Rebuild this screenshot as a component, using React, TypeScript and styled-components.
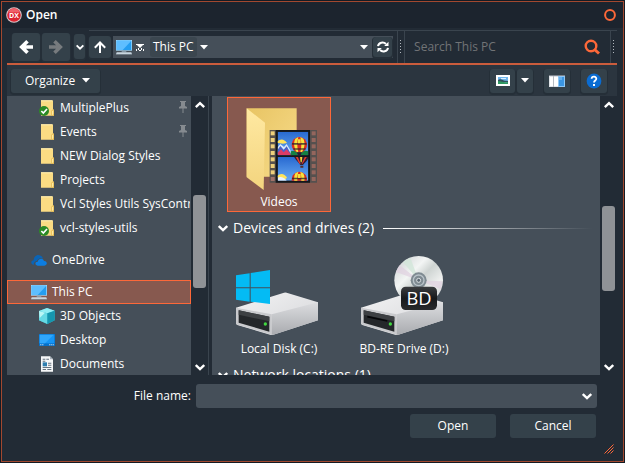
import React from "react";
import styled, { createGlobalStyle, css } from "styled-components";

const color = {
  outer: "#141b24",
  frame: "#a2482f",
  title: "#1c242e",
  shell: "#222b35",
  bar: "#2b353f",
  button: "#34414a",
  buttonEdge: "#252f38",
  field: "#454f59",
  line: "#3a444e",
  accent: "#cb5c3c",
  hot: "#fd6839",
  selected: "#87594f",
  thumb: "#8f9296",
  muted: "#717376",
};

const GlobalStyle = createGlobalStyle`
  * { box-sizing: border-box; }
  html, body, #root { height: 100%; }
  body {
    margin: 0;
    background: ${color.outer};
    color: #fff;
    font: 12px/16px "Open Sans", "Noto Sans", sans-serif;
  }
  button, input { font: inherit; color: inherit; margin: 0; border: 0; padding: 0; background: none; }
  svg { display: block; flex: none; }
`;

const Dialog = styled.main`
  height: 100vh;
  border: 1px solid ${color.outer};
  display: flex;
`;

const Frame = styled.div`
  flex: 1;
  min-width: 0;
  display: flex;
  flex-direction: column;
  border: 1px solid ${color.frame};
  background: ${color.shell};
`;

const TitleBar = styled.header`
  flex: none;
  display: flex;
  align-items: center;
  gap: 4px;
  height: 26px;
  padding: 0 6px 0 4px;
  background: ${color.title};
`;

const Title = styled.h1`
  flex: 1;
  margin: 0;
  font-size: 12px;
  font-weight: 600;
`;

const IconButton = styled.button<{ $w: number; $h: number; $flat?: boolean }>`
  flex: none;
  display: flex;
  align-items: center;
  justify-content: center;
  width: ${(p) => p.$w}px;
  height: ${(p) => p.$h}px;
  border-radius: 3px;
  ${(p) =>
    !p.$flat &&
    css`
      background: ${color.button};
      box-shadow: 0 1px 0 1px ${color.buttonEdge};
    `}
`;

const Body = styled.div`
  flex: 1;
  min-height: 0;
  display: flex;
  flex-direction: column;
  padding: 2px 6px 0 5px;
`;

const NavBar = styled.div`
  flex: none;
  display: flex;
  align-items: center;
  height: 33px;
  padding-left: 5px;
`;

const History = styled.div`
  display: flex;
  align-items: center;
  gap: 2px;
  margin-right: 4px;
`;

const NavRest = styled.div`
  flex: 1;
  min-width: 0;
  align-self: stretch;
  display: flex;
  align-items: center;
  margin-left: 4px;
  border-top: 1px solid ${color.line};
`;

const Address = styled.div`
  flex: 1;
  min-width: 0;
  display: flex;
  align-items: center;
  height: 22px;
  margin: 0 4px 0 2px;
  padding: 0 1px 0 3px;
  background: ${color.field};
`;

const Crumb = styled.button`
  height: 20px;
  padding: 0 3px;
  margin-left: 2px;
  border-radius: 3px;
  background: #3b464f;
`;

const Spacer = styled.div`
  flex: 1;
`;

const Grip = styled.div`
  flex: none;
  align-self: stretch;
  display: flex;
  align-items: center;
  justify-content: center;
  width: 7px;
  border-left: 1px solid ${color.line};
`;

const Search = styled.div`
  flex: none;
  width: 39%;
  align-self: stretch;
  display: flex;
  align-items: center;
  padding: 0 9px;
  border-left: 1px solid ${color.line};
`;

const SearchInput = styled.input`
  flex: 1;
  min-width: 0;
  outline: 0;
  &::placeholder { color: ${color.muted}; opacity: 1; }
`;

const CommandBar = styled.div`
  flex: none;
  display: flex;
  align-items: center;
  height: 33px;
  padding: 0 10px 0 4px;
  border-top: 2px solid ${color.accent};
  background: ${color.bar};
`;

const Organize = styled.button`
  display: flex;
  align-items: center;
  gap: 7px;
  height: 24px;
  padding: 0 10px 0 14px;
  border-radius: 3px;
  background: ${color.button};
  box-shadow: 0 1px 0 1px ${color.buttonEdge};
`;

const Commands = styled.div`
  display: flex;
  gap: 2px;
  margin-left: 11px;
`;

const Content = styled.div`
  flex: 1;
  min-height: 0;
  display: flex;
`;

const Tree = styled.nav`
  flex: none;
  display: flex;
  width: 201px;
`;

const TreeList = styled.ul`
  flex: 1;
  min-width: 0;
  margin: 0;
  padding: 0;
  overflow: hidden;
  list-style: none;
  background: ${color.field};
`;

const TreeItem = styled.button<{ $level: number; $selected?: boolean }>`
  display: flex;
  align-items: center;
  gap: 5px;
  width: 100%;
  height: 24px;
  padding-left: ${(p) => 15 + p.$level * 8}px;
  border: 1px solid ${(p) => (p.$selected ? color.hot : "transparent")};
  background: ${(p) => (p.$selected ? color.selected : "transparent")};
  overflow: hidden;
  white-space: nowrap;
  text-align: left;
`;

const TreeGroup = styled.li`
  & + & { margin-top: 8px; }
`;

const ItemText = styled.span`
  flex: 1 0 auto;
`;

const Scroll = styled.div`
  flex: none;
  display: flex;
  flex-direction: column;
  align-items: center;
  width: 17px;
  background: ${color.shell};
`;

const Track = styled.div`
  flex: 1;
  display: flex;
  flex-direction: column;
  width: 13px;
`;

const TrackPart = styled.div<{ $share: number; $thumb?: boolean }>`
  flex: ${(p) => p.$share} 0 0;
  border-radius: 3px;
  background: ${(p) => (p.$thumb ? color.thumb : "transparent")};
`;

const Files = styled.section`
  flex: 1;
  min-width: 0;
  display: flex;
  border-left: 1px solid ${color.line};
  padding-left: 3px;
`;

const FileList = styled.div`
  flex: 1;
  min-width: 0;
  overflow: hidden;
  padding: 1px 8px 0 6px;
  background: ${color.field};
`;

const Tiles = styled.div`
  display: flex;
  flex-wrap: wrap;
  gap: 21px;
  padding-left: 9px;
`;

const Tile = styled.button<{ $selected?: boolean }>`
  display: flex;
  flex-direction: column;
  align-items: center;
  gap: 4px;
  width: 104px;
  height: 115px;
  border: 1px solid ${(p) => (p.$selected ? color.hot : "transparent")};
  background: ${(p) => (p.$selected ? color.selected : "transparent")};
  white-space: nowrap;
`;

const GroupHeader = styled.h2`
  display: flex;
  align-items: center;
  gap: 5px;
  height: 32px;
  margin: 0;
  font-size: 14px;
  line-height: 20px;
  font-weight: 400;
  white-space: nowrap;
`;

const Rule = styled.span`
  flex: 1;
  height: 1px;
  margin-left: 4px;
  background: linear-gradient(to right, #fff, #c8cbce 30%, ${color.field});
`;

const Footer = styled.footer`
  flex: none;
  display: flex;
  flex-direction: column;
  gap: 6px;
  padding: 9px 20px 6px 0;
`;

const FileRow = styled.div`
  display: flex;
  align-items: center;
  gap: 5px;
`;

const FileLabel = styled.label`
  width: 184px;
  text-align: right;
`;

const Combo = styled.div`
  flex: 1;
  display: flex;
  align-items: center;
  height: 24px;
  padding: 0 1px 0 6px;
  border-radius: 3px;
  background: ${color.field};
`;

const FileInput = styled.input`
  flex: 1;
  min-width: 0;
  outline: 0;
`;

const Actions = styled.div`
  display: flex;
  justify-content: flex-end;
  gap: 14px;
  padding-right: 1px;
`;

const ActionButton = styled.button`
  width: 86px;
  height: 24px;
  border-radius: 3px;
  background: ${color.button};
`;

const GripRow = styled.div`
  flex: none;
  display: flex;
  justify-content: flex-end;
  padding: 0 3px 7px 0;
`;

type ChevronProps = { up?: boolean; size?: number; weight?: number };

const Chevron = ({ up, size = 10, weight = 2.4 }: ChevronProps) => (
  <svg width={size} height={size} viewBox="0 0 10 10" fill="none" stroke="#fff" strokeWidth={weight}>
    <path d={up ? "M.8 7.2 5 3.2l4.2 4" : "M.8 3 5 7l4.2-4"} />
  </svg>
);

const Caret = () => (
  <svg width="8" height="5" viewBox="0 0 8 5" fill="#fff"><path d="M0 0h8L4 4.6z" /></svg>
);

const Arrow = ({ kind }: { kind: "back" | "forward" | "up" }) =>
  kind === "up" ? (
    <svg width="12" height="12" viewBox="0 0 12 12" fill="none" stroke="#fff" strokeWidth="2">
      <path d="M6 12V1.500M.8 6.700 6 1.500l5.200 5.200" />
    </svg>
  ) : (
    <svg width="14" height="14" viewBox="0 0 14 14" fill="none" stroke={kind === "back" ? "#fff" : "#777b7e"} strokeWidth="3.600">
      <path d={kind === "back" ? "M14 7H3M8.500 1.300 2.700 7l5.800 5.700" : "M0 7h11M5.500 1.300 11.300 7l-5.800 5.700"} />
    </svg>
  );

const AppLogo = () => (
  <svg width="16" height="16" viewBox="0 0 16 16">
    <circle cx="8" cy="8" r="7.8" fill="#d9c9cc" />
    <circle cx="8" cy="8" r="6.8" fill="#dc2430" />
    <path d="M2 5.5a6.5 6.5 0 0 1 12 0z" fill="#ef6068" />
    <text x="8" y="10.6" fontFamily="Open Sans" fontSize="7" fontWeight="700" fill="#fff" textAnchor="middle">DX</text>
  </svg>
);

const CloseIcon = () => (
  <svg width="12" height="12" viewBox="0 0 12 12"><circle cx="6" cy="6" r="4.9" fill="none" stroke={color.hot} strokeWidth="2" /></svg>
);

const RefreshIcon = () => (
  <svg width="12" height="12" viewBox="0 0 12 12" fill="none" stroke="#fff" strokeWidth="2">
    <path d="M1 5.2C1.6 1.4 6.5.6 9 3M11 6.8C10.4 10.6 5.500 11.400 3 9" />
    <path d="M11.500.8V5H7.200zM.5 11.200V7h4.300z" fill="#fff" stroke="none" />
  </svg>
);

const SearchIcon = () => (
  <svg width="16" height="16" viewBox="0 0 16 16" fill="none" stroke={color.hot} strokeWidth="2.4">
    <circle cx="7" cy="7" r="5.300" /><path d="m10 10 5 4.500" strokeWidth="3" />
  </svg>
);

const Dots = () => (
  <svg width="2" height="14" viewBox="0 0 2 14" fill="#b4bac0">
    {[0, 3, 6, 9, 12].map((y) => <rect key={y} y={y} width="1" height="1" />)}
  </svg>
);

const OverflowIcon = () => (
  <svg width="8" height="7" viewBox="0 0 8 7" fill="#fff">
    <path d="M0 0h8v1H7L4 4 1 1H0zM0 5h1v2H0zM2 4h1v2H2zM5 4h1v2H5zM7 5h1v2H7zM3 6h2v1H3z" />
  </svg>
);

const ViewIcon = () => (
  <svg width="14" height="11" viewBox="0 0 14 11">
    <path fill="#fff" d="M0 0h14v11H0z" />
    <path fill="#70b7ed" d="M2 2h10v7H2z" />
    <path fill="#32515f" d="M2 5c3-2 4 1 10 1v1H2z" />
    <path fill="#2f9861" d="M2 6c4 0 5 2 10 1v2H2z" />
    <path fill="#dff2ff" d="M5 3h5v1H5z" />
  </svg>
);

const PaneIcon = () => (
  <svg width="16" height="12" viewBox="0 0 16 12">
    <path fill="#dfe3e8" d="M0 0h16v12H0z" />
    <path fill="#7d858e" d="M0 0h16v1H0z" />
    <path fill="#fff" d="M1 2h3v9H1zM5 2h4v9H5z" />
    <path fill="#8fc7f4" d="M9 1h7v11H9z" />
    <path fill="#3b96e2" d="M10 2h5v9h-5z" />
    <path fill="#64b0ef" d="M10 2h3v3h-3z" />
    <path fill="#b7bdc4" d="M4 1h1v11H4z" />
  </svg>
);

const HelpIcon = () => (
  <svg width="16" height="16" viewBox="0 0 16 16">
    <circle cx="8" cy="8" r="7.400" fill="#0a6cd2" />
    <path d="M5.600 5.700C5.800 2.800 10.600 3 10.300 6 10.100 7.500 8 7.600 8 9.600" fill="none" stroke="#fff" strokeWidth="1.800" />
    <path d="M7 11h2v2H7z" fill="#fff" />
  </svg>
);

const PinIcon = () => (
  <svg width="8" height="12" viewBox="0 0 8 12" fill="#868b90">
    <path d="M1 0h6v1H6v4l2 1v1.500H0V6l2-1V1H1zM3.500 7h1v5h-1z" />
  </svg>
);

const ResizeIcon = () => (
  <svg width="10" height="10" viewBox="0 0 10 10" stroke={color.hot} strokeWidth="1">
    <path d="M.5 9.500l9-9M3.500 9.500l6-6M6.500 9.500l3-3" />
  </svg>
);

type IconKind = "folder" | "checked" | "cloud" | "pc" | "cube" | "desktop" | "document";

const SmallIcon = ({ kind }: { kind: IconKind }) => (
  <svg width="16" height="16" viewBox="0 0 48 48">
    {(kind === "folder" || kind === "checked") && (
      <>
        <path d="M6 1h34q2 0 2 2v25l3 2v17H6z" fill="#fbdc83" />
        <path d="M6 1h34v3H6z" fill="#fff0b5" />
        <path d="M42 28l3 2v17h-8V32z" fill="#e6b94e" />
        <path d="M39 33l4-2v12l-4 3z" fill="#ffeaa0" />
      </>
    )}
    {kind === "checked" && (
      <>
        <circle cx="15" cy="33" r="15" fill="#2b8a25" />
        <path d="M7 33l6 6 11-12" fill="none" stroke="#fff" strokeWidth="5" />
      </>
    )}
    {kind === "cloud" && (
      <>
        <path d="M8 39C-2 37-1 25 8 25 8 13 19 5 29 11c4 2 6 5 7 9-8-4-16 0-18 7-8 1-10 7-10 12z" fill="#0b64b5" />
        <path d="M20 41c-10-2-8-13 0-12 2-10 16-12 19-2 10-1 12 13 1 14z" fill="#0c7de0" />
      </>
    )}
    {kind === "pc" && (
      <>
        <path d="M0 3h48v32H0z" fill="#a7dfff" />
        <path d="M2 5h44v28H2z" fill="#249df0" />
        <path d="M2 5h44L20 33H2z" fill="#5ebeff" />
        <path d="M17 35h14v5H17z" fill="#879aa8" />
        <path d="M2 40h44l2 6H0z" fill="#c9d6df" />
        <path d="M0 45h48v2H0z" fill="#76838d" />
      </>
    )}
    {kind === "cube" && (
      <>
        <path d="M24 0l23 8v29L25 48 0 37V9z" fill="#3cc0d4" />
        <path d="M24 0l23 8-22 8L0 9z" fill="#91edf3" />
        <path d="M0 9l25 7v32L0 37z" fill="#65d9e4" />
        <path d="M25 16l22-8v29L25 48z" fill="#1696ae" />
        <path d="M0 9l18 5L2 30z" fill="#b9f6f5" />
      </>
    )}
    {kind === "desktop" && (
      <>
        <path d="M0 6h48v36H0z" fill="#0670c8" />
        <path d="M2 8h44v26H2z" fill="#1595f5" />
        <path d="M2 8h42L18 34H2z" fill="#30a7fb" />
        <path d="M4 37h3v3H4zM10 37h3v3h-3zM31 37h3v3h-3zM37 37h3v3h-3zM43 37h2v3h-2z" fill="#fff" />
      </>
    )}
    {kind === "document" && (
      <>
        <path d="M6 1h27l9 9v37H6z" fill="#f6f7f8" />
        <path d="M33 1v9h9z" fill="#a7b1ba" />
        <path d="M11 8h8v3h-8zM22 8h8v3h-8zM11 14h8v3h-8zM27 20h10v3H27zM27 26h10v3H27zM11 39h10v3H11zM25 39h12v3H25zM11 33h26v3H11z" fill="#65737f" />
        <path d="M11 19h13v12H11z" fill="#2e7eaf" />
      </>
    )}
  </svg>
);

const Balloon = () => (
  <>
    <path d="M283 141c-13 0-23 11-23 24 0 10 7 17 14 22h18c8-6 14-13 14-22 0-13-10-24-23-24z" fill="#d92c24" />
    <path d="M271 146c-6 12-5 27 5 41h4c-4-15-4-31 0-46zM295 146c6 12 5 27-5 41h-4c4-15 4-31 0-46z" fill="#f6e33c" />
    <path d="M261 159h44v5h-44zM265 175h37v4h-37z" fill="#25222b" opacity=".75" />
    <path d="M279 148h8v12h-8z" fill="#f6e33c" />
    <path d="M275 187h16l-4 8h-8z" fill="#2b1c38" />
  </>
);

const VideosIcon = () => (
  <svg width="96" height="92" viewBox="78 24 288 276">
    <defs>
      <linearGradient id="folderBack" x1="0" y1="0" x2="1" y2="1">
        <stop stopColor="#e8c463" /><stop offset="1" stopColor="#f7dc8b" />
      </linearGradient>
      <linearGradient id="folderFlap" x1="0" y1="0" x2="0" y2="1">
        <stop stopColor="#ffe9a2" /><stop offset="1" stopColor="#f3d47e" />
      </linearGradient>
      <linearGradient id="sky" x1="0" y1="0" x2="0" y2="1">
        <stop stopColor="#2869d0" /><stop offset="1" stopColor="#68aaf4" />
      </linearGradient>
      <clipPath id="frameTop"><path d="M218 125h92v71h-92z" /></clipPath>
      <clipPath id="frameBottom"><path d="M218 201h92v71h-92z" /></clipPath>
    </defs>
    <path d="M125 55h150v205H125z" fill="url(#folderBack)" />
    <path d="M125 55l55 43-4 202-51-38z" fill="url(#folderFlap)" />
    <path d="M194 120h142v158H194z" fill="#55504e" />
    <path d="M212 120h103v158H212z" fill="#15171b" />
    {[124, 144, 163, 183, 202, 222, 241, 261].map((y) => (
      <React.Fragment key={y}>
        <path d={`M197 ${y}h12v12h-12z`} fill={y > 255 ? "#a27268" : "#edcf7b"} />
        <path d={`M320 ${y}h12v12h-12z`} fill="#94665d" />
      </React.Fragment>
    ))}
    <g clipPath="url(#frameTop)">
      <path d="M218 125h92v71h-92z" fill="url(#sky)" />
      <path d="M216 155c11-10 22-8 30 4l-12 2-16-2z" fill="#ffe45b" />
      <path d="M218 172l8-10 11 9 8-9 18 31h-45z" fill="#dbe9fb" />
      <path d="M218 179l8-11 10 11 9-10 15 27h-42z" fill="#4662c8" />
      <path d="M218 188l10-10 8 9 9-9 15 18h-42z" fill="#dc3c66" />
      <path d="M257 184q27-6 53 0v12h-53z" fill="#148044" />
      <Balloon />
    </g>
    <g clipPath="url(#frameBottom)">
      <path d="M218 201h92v71h-92z" fill="url(#sky)" />
      <path d="M267 200h43c0 12-11 18-16 25h-8c-4-8-15-14-19-25z" fill="#302034" />
      <path d="M272 200h6l9 21h-4zM300 200h6l-13 21h-3z" fill="#e53a2c" />
      <path d="M285 200h7l-2 17h-3z" fill="#f4db3a" />
      <path d="M286 227h9v6h-9z" fill="#592c25" />
      <path d="M216 258c10-10 23-8 30 5l-9 8-19-8z" fill="#ffe45b" />
      <path d="M218 263q15-6 27 9h-27z" fill="#e9f3ff" />
      <g transform="translate(0 104)"><Balloon /></g>
    </g>
  </svg>
);

const DriveBody = ({ id }: { id: string }) => (
  <>
    <defs>
      <linearGradient id={`${id}Top`} x1="0" y1="0" x2="1" y2="1">
        <stop stopColor="#f3f3f4" /><stop offset="1" stopColor="#d4d5d8" />
      </linearGradient>
      <linearGradient id={`${id}Side`} x1="0" y1="0" x2="0" y2="1">
        <stop stopColor="#dcdde0" /><stop offset="1" stopColor="#a9abaf" />
      </linearGradient>
    </defs>
    <path d="M93 203l144-45q4-1 8 0l94 29v54l-134 43q-5 2-10 0l-98-29q-4-1-4-6z" fill={`url(#${id}Top)`} />
    <path d="M200 223l139-36v54l-134 43q-5 1-6 0z" fill={`url(#${id}Side)`} />
    <path d="M93 203l107 20v61l-103-30q-4-1-4-6z" fill="#c9cacd" />
    <path d="M101 211l92 19v45l-92-27z" fill="#24272a" />
    <path d="M101 211l92 19v14l-92-20z" fill="#3d4043" />
    <circle cx="181" cy="252" r="5" fill="#42d740" />
  </>
);

const LocalDiskIcon = () => (
  <svg width="96" height="92" viewBox="78 15 288 276">
    <DriveBody id="local" />
    <path d="M93 106l41-6v42H93zM137 99l58-9v52h-58zM93 145h41v40l-41-6zM137 145h58v47l-58-7z" fill="#04bbf4" />
  </svg>
);

const DiscDriveIcon = () => (
  <svg width="96" height="92" viewBox="453 15 288 276">
    <defs>
      <linearGradient id="disc" x1="0" y1="0" x2="1" y2="1">
        <stop stopColor="#c7ccce" /><stop offset=".35" stopColor="#f3f5f4" />
        <stop offset=".5" stopColor="#ced4d2" /><stop offset=".72" stopColor="#eff0ef" />
        <stop offset="1" stopColor="#b9bebf" />
      </linearGradient>
      <linearGradient id="badge" x1="0" y1="0" x2="0" y2="1">
        <stop stopColor="#3b3d40" /><stop offset=".5" stopColor="#17191b" /><stop offset="1" stopColor="#292b2d" />
      </linearGradient>
    </defs>
    <g transform="translate(375 0)">
      <DriveBody id="bd" />
      <path d="M112 230l60 13" stroke="#050608" strokeWidth="5" />
    </g>
    <circle cx="641" cy="121" r="73" fill="url(#disc)" />
    <path d="M641 121l-68-25q4-12 11-21zM641 121l66 27q4-12 5-24z" fill="#dfd0df" opacity=".7" />
    <path d="M641 121l-25-68q-14 6-22 14z" fill="#d2e6d9" opacity=".8" />
    <circle cx="641" cy="121" r="24" fill="#7f8b92" />
    <circle cx="641" cy="121" r="16" fill="none" stroke="#b9c3c9" strokeWidth="4" />
    <circle cx="641" cy="121" r="6" fill="#596671" stroke="#dde2e4" strokeWidth="3" />
    <rect x="588" y="140" width="108" height="70" rx="14" fill="url(#badge)" />
    <text x="642" y="194" fontFamily="Open Sans" fontSize="55" fill="#fff" textAnchor="middle">BD</text>
  </svg>
);

type Entry = { label: string; icon: IconKind; level: number; pinned?: boolean; selected?: boolean };

const groups: Entry[][] = [
  [
    { label: "MultiplePlus", icon: "checked", level: 2, pinned: true },
    { label: "Events", icon: "folder", level: 2, pinned: true },
    { label: "NEW Dialog Styles", icon: "folder", level: 2 },
    { label: "Projects", icon: "folder", level: 2 },
    { label: "Vcl Styles Utils SysContro", icon: "folder", level: 2 },
    { label: "vcl-styles-utils", icon: "checked", level: 2 },
  ],
  [{ label: "OneDrive", icon: "cloud", level: 1 }],
  [
    { label: "This PC", icon: "pc", level: 1, selected: true },
    { label: "3D Objects", icon: "cube", level: 2 },
    { label: "Desktop", icon: "desktop", level: 2 },
    { label: "Documents", icon: "document", level: 2 },
  ],
];

const PinSlot = styled.span`
  align-self: flex-start;
  padding: 4px 3px 0 0;
`;

const ScrollBar = ({ parts }: { parts: [number, number, number] }) => (
  <Scroll>
    <IconButton $w={17} $h={18} $flat aria-label="Scroll up"><Chevron up /></IconButton>
    <Track>
      <TrackPart $share={parts[0]} />
      <TrackPart $share={parts[1]} $thumb />
      <TrackPart $share={parts[2]} />
    </Track>
    <IconButton $w={17} $h={17} $flat aria-label="Scroll down"><Chevron /></IconButton>
  </Scroll>
);

export default function App() {
  return (
    <Dialog>
      <GlobalStyle />
      <Frame>
        <TitleBar>
          <AppLogo />
          <Title>Open</Title>
          <IconButton $w={14} $h={14} $flat aria-label="Close"><CloseIcon /></IconButton>
        </TitleBar>
        <Body>
          <NavBar>
            <History>
              <IconButton $w={28} $h={28} aria-label="Back"><Arrow kind="back" /></IconButton>
              <IconButton $w={28} $h={28} aria-label="Forward"><Arrow kind="forward" /></IconButton>
            </History>
            <IconButton $w={11} $h={25} aria-label="Recent locations"><Chevron size={8} /></IconButton>
            <NavRest>
              <IconButton $w={22} $h={22} aria-label="Up"><Arrow kind="up" /></IconButton>
              <Address>
                <SmallIcon kind="pc" />
                <IconButton $w={16} $h={20} $flat aria-label="Locations"><OverflowIcon /></IconButton>
                <Crumb>This PC</Crumb>
                <IconButton $w={14} $h={20} $flat aria-label="This PC folders"><Caret /></IconButton>
                <Spacer />
                <IconButton $w={18} $h={20} $flat aria-label="Previous locations"><Caret /></IconButton>
                <IconButton $w={19} $h={20} aria-label="Refresh"><RefreshIcon /></IconButton>
              </Address>
              <Grip><Dots /></Grip>
              <Search>
                <SearchInput aria-label="Search This PC" placeholder="Search This PC" />
                <IconButton $w={18} $h={20} $flat aria-label="Search"><SearchIcon /></IconButton>
              </Search>
              <Grip><Dots /></Grip>
            </NavRest>
          </NavBar>
          <CommandBar>
            <Organize>Organize<Caret /></Organize>
            <Spacer />
            <Commands>
              <IconButton $w={25} $h={24} aria-label="Change view"><ViewIcon /></IconButton>
              <IconButton $w={16} $h={24} aria-label="More view options"><Caret /></IconButton>
            </Commands>
            <Commands><IconButton $w={26} $h={24} aria-label="Preview pane"><PaneIcon /></IconButton></Commands>
            <Commands><IconButton $w={26} $h={24} aria-label="Help"><HelpIcon /></IconButton></Commands>
          </CommandBar>
          <Content>
            <Tree aria-label="Folders">
              <TreeList>
                {groups.map((group) => (
                  <TreeGroup key={group[0].label}>
                    {group.map((entry) => (
                      <TreeItem key={entry.label} $level={entry.level} $selected={entry.selected}>
                        <SmallIcon kind={entry.icon} />
                        <ItemText>{entry.label}</ItemText>
                        {entry.pinned && <PinSlot><PinIcon /></PinSlot>}
                      </TreeItem>
                    ))}
                  </TreeGroup>
                ))}
              </TreeList>
              <ScrollBar parts={[81, 93, 70]} />
            </Tree>
            <Files>
              <FileList>
                <Tiles>
                  <Tile $selected><VideosIcon />Videos</Tile>
                </Tiles>
                <GroupHeader><Chevron />Devices and drives (2)<Rule /></GroupHeader>
                <Tiles>
                  <Tile><LocalDiskIcon />Local Disk (C:)</Tile>
                  <Tile><DiscDriveIcon />BD-RE Drive (D:)</Tile>
                </Tiles>
                <GroupHeader><Chevron />Network locations (1)</GroupHeader>
              </FileList>
              <ScrollBar parts={[92, 85, 67]} />
            </Files>
          </Content>
          <Footer>
            <FileRow>
              <FileLabel htmlFor="file-name">File name:</FileLabel>
              <Combo>
                <FileInput id="file-name" />
                <IconButton $w={18} $h={22} $flat aria-label="Recent file names"><Chevron /></IconButton>
              </Combo>
            </FileRow>
            <Actions>
              <ActionButton>Open</ActionButton>
              <ActionButton>Cancel</ActionButton>
            </Actions>
          </Footer>
          <GripRow><ResizeIcon /></GripRow>
        </Body>
      </Frame>
    </Dialog>
  );
}
